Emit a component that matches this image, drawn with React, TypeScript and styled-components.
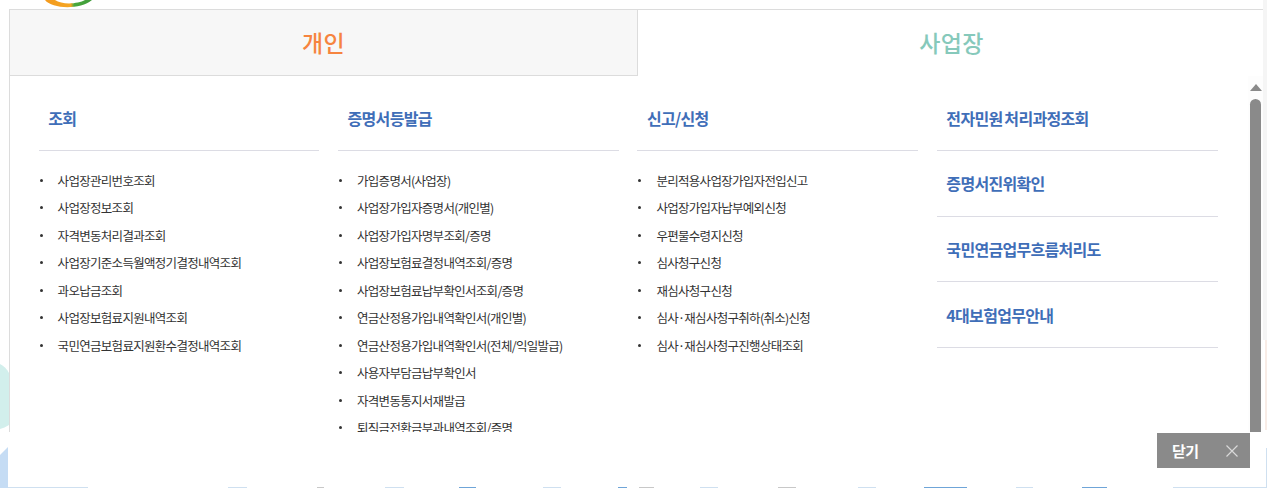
import React from "react";
import styled, { createGlobalStyle } from "styled-components";

const Global = createGlobalStyle`
  html, body { margin: 0; padding: 0; background: #fff; }
  * { box-sizing: border-box; }
  body { font-family: "Noto Sans CJK KR", "Noto Sans", sans-serif; color: #333; }
`;

const Page = styled.div`
  position: relative;
  width: 1267px;
  height: 488px;
  overflow: hidden;
  background: #fff;
`;

const Art = styled.svg`
  position: absolute;
  inset: 0;
`;

const Modal = styled.div`
  position: relative;
  margin: 9px 4px 0 9px;
  height: 478px;
  display: flex;
  flex-direction: column;
  background: #fff;
`;

const Tabs = styled.div`
  display: flex;
  height: 67px;
  flex: none;
  border-top: 1px solid #dcdcdc;
`;

const Tab = styled.div<{ $active?: boolean; $color: string }>`
  flex: ${(p) => (p.$active ? "1" : "0 0 629px")};
  display: flex;
  align-items: center;
  justify-content: center;
  font-size: 23px;
  font-weight: 500;
  letter-spacing: 0.3px;
  color: ${(p) => p.$color};
  padding: 0 0 2px ${(p) => (p.$active ? "2px" : "0")};
  background: ${(p) => (p.$active ? "#fff" : "#f7f7f7")};
  border: ${(p) => (p.$active ? "none" : "1px solid #dcdcdc")};
  border-top: none;
`;

const Body = styled.div`
  height: 356px;
  flex: none;
  display: flex;
  border-left: 1px solid #dcdcdc;
`;

const Content = styled.div`
  flex: 1;
  min-width: 0;
  overflow: hidden;
  padding: 10px 0 0 28.6px;
  display: grid;
  grid-template-columns: repeat(4, 280.8px);
  column-gap: 18.6px;
  align-content: start;
`;

const Scrollbar = styled.div`
  width: 15px;
  flex: none;
  display: flex;
  flex-direction: column;
  align-items: center;
  padding-top: 8px;
  background: #fdfdfd;
`;

const Arrow = styled.div`
  width: 0;
  height: 0;
  border-left: 6.5px solid transparent;
  border-right: 6.5px solid transparent;
  border-bottom: 7px solid #8a8a8a;
`;

const Thumb = styled.div`
  margin-top: 8px;
  width: 11px;
  flex: 1;
  background: #8a8a8a;
  border-radius: 6px 6px 0 0;
`;

const Column = styled.section`
  min-width: 0;
`;

const Head = styled.h3<{ $plain?: boolean }>`
  margin: 0;
  height: ${(p) => (p.$plain ? "65.67px" : "65px")};
  display: flex;
  align-items: center;
  padding-left: 9.6px;
  border-bottom: 1px solid #dcdce4;
  font-size: 16px;
  font-weight: 700;
  letter-spacing: -0.7px;
  word-spacing: -1px;
  color: #3f6eb8;
  white-space: nowrap;
`;

const List = styled.ul`
  list-style: none;
  margin: 15.5px 0 0;
  padding: 0;
`;

const Item = styled.li`
  display: flex;
  align-items: center;
  gap: 15px;
  height: 27.5px;
  font-size: 12.5px;
  letter-spacing: -0.7px;
  color: #333;
  white-space: nowrap;
  &::before {
    content: "";
    flex: none;
    margin-left: 1px;
    width: 3px;
    height: 3px;
    border-radius: 50%;
    background: #333;
  }
`;

const Footer = styled.div`
  display: flex;
  justify-content: flex-end;
  padding: 1px 13px 0 0;
`;

const CloseButton = styled.button`
  width: 93px;
  height: 35px;
  border: 0;
  padding: 0 11px 0 15px;
  display: flex;
  align-items: center;
  justify-content: space-between;
  background: #8a8a8a;
  color: #fff;
  font: 700 15px "Noto Sans CJK KR", sans-serif;
  letter-spacing: -0.6px;
`;

const columns = [
  {
    title: "조회",
    items: [
      "사업장관리번호조회",
      "사업장정보조회",
      "자격변동처리결과조회",
      "사업장기준소득월액정기결정내역조회",
      "과오납금조회",
      "사업장보험료지원내역조회",
      "국민연금보험료지원환수결정내역조회",
    ],
  },
  {
    title: "증명서등발급",
    items: [
      "가입증명서(사업장)",
      "사업장가입자증명서(개인별)",
      "사업장가입자명부조회/증명",
      "사업장보험료결정내역조회/증명",
      "사업장보험료납부확인서조회/증명",
      "연금산정용가입내역확인서(개인별)",
      "연금산정용가입내역확인서(전체/익일발급)",
      "사용자부담금납부확인서",
      "자격변동통지서재발급",
      "퇴직금전환금부과내역조회/증명",
    ],
  },
  {
    title: "신고/신청",
    items: [
      "분리적용사업장가입자전입신고",
      "사업장가입자납부예외신청",
      "우편물수령지신청",
      "심사청구신청",
      "재심사청구신청",
      "심사·재심사청구취하(취소)신청",
      "심사·재심사청구진행상태조회",
    ],
  },
];

const links = ["증명서진위확인", "국민연금업무흐름처리도", "4대보험업무안내"];

const strip: [number, number, string][] = [
  [8, 80, "#cfe0f0"],
  [228, 19, "#cfe0f0"],
  [317, 7, "#c8c8c8"],
  [385, 19, "#cfe0f0"],
  [459, 17, "#6fa5d8"],
  [543, 18, "#cfe0f0"],
  [618, 9, "#6fa5d8"],
  [639, 15, "#c8c8c8"],
  [700, 18, "#cfe0f0"],
  [778, 18, "#c8c8c8"],
  [858, 18, "#cfe0f0"],
  [924, 43, "#6fa5d8"],
  [1016, 17, "#cfe0f0"],
  [1082, 25, "#6fa5d8"],
  [1173, 93, "#cfe0f0"],
];

export default function App() {
  return (
    <Page>
      <Global />
      <Art width="1267" height="488" viewBox="0 0 1267 488">
        <defs>
          <linearGradient id="ring" x1="0" x2="1" y1="0" y2="0">
            <stop offset="0" stopColor="#f39a1e" />
            <stop offset="0.55" stopColor="#f5a623" />
            <stop offset="0.62" stopColor="#4aa83c" />
            <stop offset="1" stopColor="#3f9c3a" />
          </linearGradient>
        </defs>
        <path d="M45 0 C52 9 80 10 92 0 L85 0 C78 4 62 5 55 0 Z" fill="url(#ring)" />
        <path d="M0 364 C4 366 7 369 9 373 L9 425 C6 427 3 428 0 429 Z" fill="#d2efec" />
        <path d="M0 455 L8 447 L8 488 L0 488 Z" fill="#c5dcf4" />
        <rect x="1263" y="0" width="4" height="340" fill="#f5f5f5" />
        <rect x="1265" y="340" width="2" height="90" fill="#f8ece6" />
        <rect x="1266" y="448" width="1" height="40" fill="#cfe0f0" />
        {strip.map(([x, w, c]) => (
          <rect key={x} x={x} y="487" width={w} height="1" fill={c} />
        ))}
      </Art>
      <Modal>
        <Tabs>
          <Tab $color="#f6843f">개인</Tab>
          <Tab $active $color="#86c9bb">사업장</Tab>
        </Tabs>
        <Body>
          <Content>
            {columns.map((c) => (
              <Column key={c.title}>
                <Head>{c.title}</Head>
                <List>
                  {c.items.map((i) => (
                    <Item key={i}>{i}</Item>
                  ))}
                </List>
              </Column>
            ))}
            <Column>
              <Head>전자민원 처리과정조회</Head>
              {links.map((l) => (
                <Head key={l} $plain>
                  {l}
                </Head>
              ))}
            </Column>
          </Content>
          <Scrollbar>
            <Arrow />
            <Thumb />
          </Scrollbar>
        </Body>
        <Footer>
          <CloseButton>
            닫기
            <svg width="14" height="14" viewBox="0 0 14 14" fill="none" stroke="#d9d9d9" strokeWidth="1.2">
              <path d="M1.5 1.5 L12.5 12.5 M12.5 1.5 L1.5 12.5" />
            </svg>
          </CloseButton>
        </Footer>
      </Modal>
    </Page>
  );
}
